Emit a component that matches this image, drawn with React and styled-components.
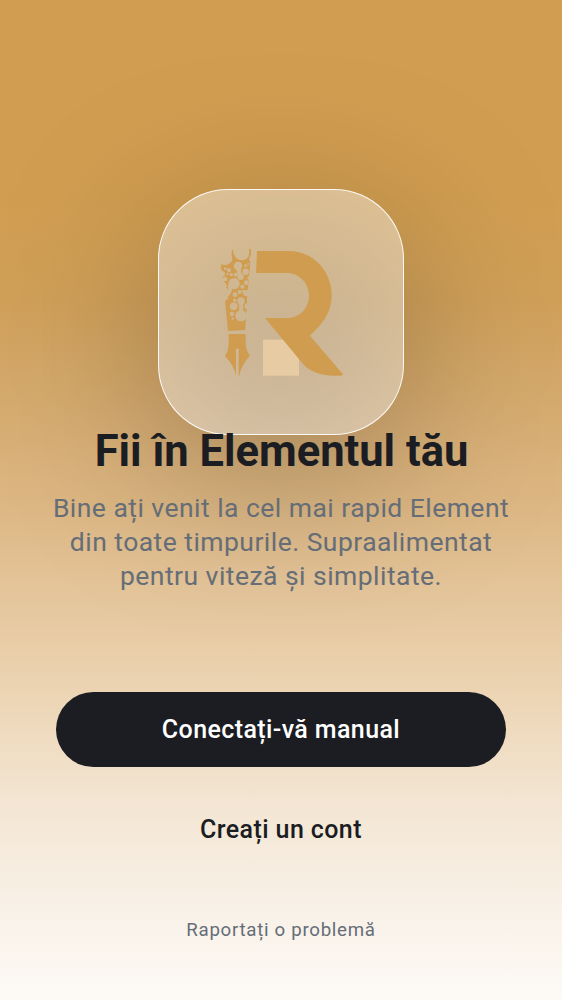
import React from 'react';
import styled, { createGlobalStyle } from 'styled-components';

const GlobalStyle = createGlobalStyle`
  * { box-sizing: border-box; }
  body { margin: 0; font-family: Roboto, sans-serif; }
`;

const Screen = styled.main`
  width: 100%;
  height: 1000px;
  overflow: hidden;
  display: flex;
  flex-direction: column;
  align-items: center;
  padding: 189px 0 0;
  background: linear-gradient(
    180deg,
    #d19d50 0, #d19e51 200px, #d0a059 300px, #d5aa6e 400px, #dcb682 500px,
    #e5c69c 600px, #ecd4b3 690px, #f3e5d2 800px, #f8f0e6 900px, #fdfaf6 1000px
  );
`;

const LogoTile = styled.div`
  position: relative;
  flex: none;
  width: 246px;
  height: 246px;

  &::before {
    content: '';
    position: absolute;
    inset: 36px 0 -36px;
    background: rgba(0, 0, 0, 0.25);
    border-radius: 60px;
    filter: blur(82px);
  }
`;

const Glass = styled.div`
  position: relative;
  width: 100%;
  height: 100%;
  padding: 50px 0 0 51px;
  border: 1px solid rgba(255, 255, 255, 0.9);
  border-radius: 70px;
  background: rgba(255, 255, 255, 0.4);
`;

const LogoSvg = styled.svg`
  display: block;
  width: 145px;
  height: 145px;
`;

const Title = styled.h1`
  position: relative;
  margin: -10px 0 0;
  padding-left: 1px;
  font-size: 43.5px;
  line-height: 53px;
  font-weight: 700;
  color: #1b1d22;
  white-space: nowrap;
`;

const Subtitle = styled.p`
  position: relative;
  width: 480px;
  margin: 13px 0 0;
  font-size: 26.5px;
  line-height: 34px;
  letter-spacing: 0.46px;
  text-align: center;
  color: #656d77;
`;

const Actions = styled.div`
  position: relative;
  width: 450px;
  margin-top: 99px;
  display: flex;
  flex-direction: column;
  gap: 25px;
`;

const Button = styled.button`
  height: 75px;
  padding: 1px 0 0;
  border: 0;
  border-radius: 38px;
  font: 500 25px/36px Roboto, sans-serif;
  letter-spacing: 0.4px;
  background: ${({ $filled }) => ($filled ? '#1b1d22' : 'transparent')};
  color: ${({ $filled }) => ($filled ? '#fff' : '#1b1d22')};
`;

const ReportLink = styled.button`
  margin-top: 51px;
  padding: 0;
  border: 0;
  background: none;
  font: 400 18.7px/25px Roboto, sans-serif;
  letter-spacing: 0.7px;
  color: #656d77;
`;

const holes = [
  [84, 78, 12.5], [92, 110, 9.5], [107, 95, 9.5], [107, 77, 4], [115, 72, 3],
  [57, 91, 6], [46, 86, 4], [64, 104, 5], [77, 104, 5.5], [53, 102, 3.5],
  [45, 117, 7], [72, 131, 17], [39, 150, 13], [97, 140, 6], [109, 128, 7],
  [89, 156, 6], [75, 164, 7], [108, 159, 9], [93, 183, 11], [93, 227, 17],
  [71, 199, 11.5], [66, 222, 6.5], [68, 236, 3.5], [74, 181, 5], [112, 199, 9],
  [40, 104, 5], [100, 154, 4], [118, 114, 6],
];

function Logo() {
  return (
    <LogoSvg viewBox="0 0 435 435" aria-hidden="true">
      <mask id="pores">
        <rect width="435" height="435" fill="#fff" />
        {holes.map(([x, y, r]) => <circle key={`${x}-${y}`} cx={x} cy={y} r={r} />)}
        <path d="M88 84 Q84 98 91 108M93 185 L94 220" stroke="#000" strokeWidth="12" fill="none" />
        <path d="M61 136 C61 155 54 162 42 173" stroke="#000" strokeWidth="13" fill="none" />
      </mask>
      <rect x="159" y="299" width="108" height="108" fill="#e6cba3" />
      <g fill="#d09d50">
        <path mask="url(#pores)" d="M33 72 C49 79 67 72 67 55 Q63 43 66 30 H69 C71 48 79 60 95 61 C111 60 121 49 117 27 H123 V44 Q114 56 120 65 V80 L117 108 L115 132 L112 157 L111 180 L110 209 L108 225 L106 270 L54 273 L45 182 L56 176 L40 160 L42 147 L52 138 L39 119 L38 107 L46 98 L34 90 Z" />
        <path d="M56 282 H107 C107 312 106 329 120 347 C101 368 91 387 88 408 H86 V334 A5 5 0 1 0 78 334 V408 C74 386 62 365 45 348 C58 330 56 312 56 282Z" />
        <path d="M141 33 H235 C310 33 365 93 365 166 C365 224 330 259 300 287 L400 404 C397 407 386 407 372 407 C330 406 295 393 276 368 L165 234 H230 C270 234 297 203 297 167 C297 130 268 99 230 99 H138 Z" />
      </g>
    </LogoSvg>
  );
}

export default function App() {
  return (
    <>
      <GlobalStyle />
      <Screen>
        <LogoTile>
          <Glass><Logo /></Glass>
        </LogoTile>
        <Title>Fii în Elementul tău</Title>
        <Subtitle>Bine ați venit la cel mai rapid Element din toate timpurile. Supraalimentat pentru viteză și simplitate.</Subtitle>
        <Actions>
          <Button $filled>Conectați-vă manual</Button>
          <Button>Creați un cont</Button>
        </Actions>
        <ReportLink>Raportați o problemă</ReportLink>
      </Screen>
    </>
  );
}
